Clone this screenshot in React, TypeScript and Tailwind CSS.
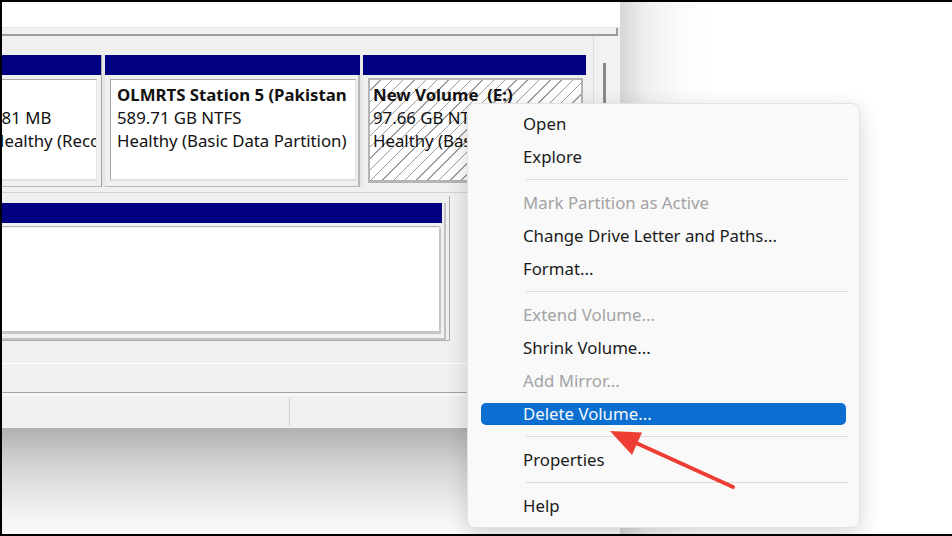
import React from "react";

const FONT = "font-['Noto_Sans',sans-serif]";

function MenuItem({ label, disabled }: { label: string; disabled?: boolean }) {
  return (
    <div
      className={`h-[33px] flex items-center pl-[55px] text-[16.8px] ${
        disabled ? "text-[#a3a3a3]" : "text-[#1b1b1b]"
      }`}
    >
      {label}
    </div>
  );
}

function Sep() {
  return (
    <div className="h-[13px] flex items-center">
      <div className="ml-[58px] mr-[11px] h-px flex-1 bg-[#dcdcdc]" />
    </div>
  );
}

function Menu() {
  return (
    <div className="absolute left-[467px] top-[103px] w-[393px] h-[425px] rounded-[8px] bg-[#f9f9f9] border border-[#e2e2e2] shadow-[0_6px_22px_rgba(0,0,0,0.16)] pt-[3px]">
      <MenuItem label="Open" />
      <MenuItem label="Explore" />
      <Sep />
      <MenuItem label="Mark Partition as Active" disabled />
      <MenuItem label="Change Drive Letter and Paths..." />
      <MenuItem label="Format..." />
      <Sep />
      <MenuItem label="Extend Volume..." disabled />
      <MenuItem label="Shrink Volume..." />
      <MenuItem label="Add Mirror..." disabled />
      <div className="h-[33px] flex items-center">
        <div className="mx-[13px] flex-1 h-[22px] rounded-[5px] bg-[#0b6fd1] flex items-center pl-[42px] text-[16.8px] text-[#f4f8fd]">
          Delete Volume...
        </div>
      </div>
      <Sep />
      <MenuItem label="Properties" />
      <Sep />
      <MenuItem label="Help" />
    </div>
  );
}

function Row1() {
  return (
    <div className="flex h-[132px] overflow-hidden">
      {/* cell 1 (cut) */}
      <div className="-ml-[22px] w-[121px] shrink-0 flex flex-col">
        <div className="h-[20px] bg-[#000080]" />
        <div className="flex-1 pt-[4px] pl-[5px] pr-[4px] pb-[5px] border-b border-[#b8b8b8]">
          <div className="h-full bg-white border-t border-l border-[#a6a6a6] border-r border-r-[#e4e4e4] border-b-2 border-b-[#e0e0e0] pt-[3px] pl-[6px] overflow-hidden whitespace-nowrap text-[16.8px] leading-[23px] text-[#111]">
            <div className="h-[23px]" />
            <div>581 MB</div>
            <div>Healthy (Recovery Partition)</div>
          </div>
        </div>
      </div>
      <div className="w-[4px] shrink-0 border-l border-[#a4a4a4] bg-[#e6e6e6]" />
      {/* cell 2 */}
      <div className="w-[255px] shrink-0 flex flex-col">
        <div className="h-[20px] bg-[#000080]" />
        <div className="flex-1 pt-[4px] pl-[5px] pr-[2px] pb-[5px] border-b border-r-2 border-[#b8b8b8]">
          <div className="h-full bg-white border-t border-l border-[#a6a6a6] border-r border-r-[#e4e4e4] border-b-2 border-b-[#e0e0e0] pt-[3px] pl-[6px] overflow-hidden whitespace-nowrap text-[16.8px] leading-[23px] text-[#111]">
            <div className="font-bold">OLMRTS Station 5 (Pakistan</div>
            <div>589.71 GB NTFS</div>
            <div>Healthy (Basic Data Partition)</div>
          </div>
        </div>
      </div>
      <div className="w-[3px] shrink-0 bg-[#e6e6e6]" />
      {/* cell 3 */}
      <div className="w-[223px] shrink-0 flex flex-col">
        <div className="h-[20px] bg-[#000080]" />
        <div className="flex-1 pt-[3px] pl-[5px] pr-[3px] pb-[4px]">
          <div className="h-full border-2 border-[#b4b4b4] border-b-[3px] bg-[repeating-linear-gradient(135deg,#ffffff_0px,#ffffff_7px,#9c9c9c_7px,#9c9c9c_8px)] pt-[3px] pl-[3px] overflow-hidden whitespace-nowrap text-[16.8px] leading-[23px] text-[#111]">
            <div className="font-bold">New Volume&nbsp; (E:)</div>
            <div>97.66 GB NTFS</div>
            <div>Healthy (Basic Data Partition)</div>
          </div>
        </div>
      </div>
      <div className="flex-1" />
    </div>
  );
}

function Row2() {
  return (
    <div className="w-[448px] h-[145px] border-r border-b border-[#ababab] pt-[7px]">
      <div className="w-[444px] h-[137px] border-r-2 border-b-2 border-[#c2c2c2] flex flex-col">
        <div className="w-[440px] h-[20px] bg-[#000080]" />
        <div className="w-[438px] h-[4px] border-b border-[#b4b4b4]" />
        <div className="w-[439px] flex-1 bg-white border-r-2 border-b-[3px] border-[#c6c6c6] mt-[1px] mb-[4px]" />
      </div>
    </div>
  );
}

function Window() {
  return (
    <div className="h-[426px] flex flex-col bg-[#f0f0f0]">
      <div className="h-[25px] bg-white" />
      <div className="h-px bg-[#e4e4e4]" />
      <div className="h-[6px] mr-[2px] border-r-2 border-[#9c9c9c]" />
      <div className="h-[2px] mr-[2px] bg-[#9c9c9c]" />
      <div className="flex-1 flex">
        <div className="w-[591px] flex flex-col pt-[19px]">
          <Row1 />
          <div className="mt-[5px] h-px bg-[#d2d2d2]" />
          <div className="mt-[3px]">
            <Row2 />
          </div>
          <div className="mt-[22px] h-px bg-white" />
        </div>
        <div className="flex-1 border-l border-[#dcdcdc] bg-[#f2f2f2]">
          <div className="ml-[9px] mt-[27px] w-[3px] h-[200px] bg-[#8a8a8a]" />
        </div>
      </div>
      <div className="h-px bg-[#a2a2a2]" />
      <div className="h-[3px] bg-[#f7f7f7]" />
      <div className="h-[32px] flex">
        <div className="w-[288px] border-r border-[#d0d0d0] my-[2px]" />
        <div className="flex-1" />
      </div>
    </div>
  );
}

export default function App() {
  return (
    <div className={`relative w-[952px] h-[536px] overflow-hidden bg-black pt-[2px] pl-[2px] pb-[2px] ${FONT}`}>
      <div className="flex w-full h-full bg-white">
        <div className="w-[618px] shrink-0 flex flex-col">
          <Window />
          <div className="flex-1 bg-[linear-gradient(to_bottom,#b0b0b0,#d4d4d4_35%,#f2f2f2_80%,#fbfbfb)]" />
        </div>
        <div className="flex-1 bg-[linear-gradient(to_right,#d6d6d6,#efefef_25px,#fbfbfb_60px,#ffffff_90px)]" />
      </div>
      <Menu />
      <svg
        className="absolute left-0 top-0 pointer-events-none"
        width="952"
        height="536"
        viewBox="0 0 952 536"
      >
        <line x1="733" y1="487" x2="634" y2="442" stroke="#ee3e33" strokeWidth="4" strokeLinecap="round" />
        <polygon points="610,431 642,432.5 632,455" fill="#ee3e33" />
      </svg>
    </div>
  );
}
